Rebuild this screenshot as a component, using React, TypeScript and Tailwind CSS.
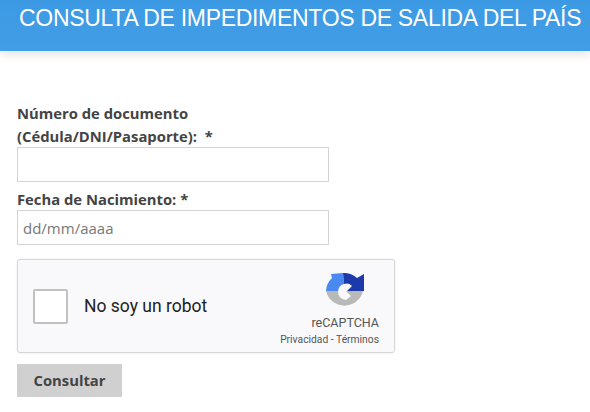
export default function App() {
  const sans = "font-['Open_Sans',sans-serif]";
  return (
    <div className="w-[590px] h-[412px] overflow-hidden bg-white">
      <header className="h-[51px] pl-[19px] pt-[4px] bg-gradient-to-b from-[#3c9ae4] to-[#419de5] shadow-[0_3px_10px_rgba(0,0,0,0.12)]">
        <h1 className="font-['Liberation_Sans',sans-serif] text-[23px] leading-[29px] tracking-[-0.3px] text-white whitespace-nowrap">
          CONSULTA DE IMPEDIMENTOS DE SALIDA DEL PAÍS
        </h1>
      </header>
      <main className={`pl-[17px] pt-[51px] ${sans}`}>
        <label className="block w-[312px] h-[45px] text-[14.8px] leading-[23px] font-bold text-[#444444]">
          Número de documento
          <br />
          (Cédula/DNI/Pasaporte):&nbsp; *
        </label>
        <input
          type="text"
          className="block w-[312px] h-[35px] border border-[#d4d4d4] bg-white px-[5px] outline-none"
        />
        <label className="block mt-[6px] h-[22px] text-[14.8px] leading-[23px] font-bold text-[#444444]">
          Fecha de Nacimiento:&nbsp;*
        </label>
        <input
          type="text"
          placeholder="dd/mm/aaaa"
          className="block w-[312px] h-[35px] border border-[#d4d4d4] bg-white px-[5px] text-[15px] text-[#666666] placeholder:text-[#777777] outline-none"
        />
        <div className="mt-[14px] w-[378px] h-[94px] flex items-center rounded-[3px] border border-[#d6d6d6] bg-[#f9f9fb] shadow-[0_0_3px_rgba(0,0,0,0.08)]">
          <div className="ml-[15px] w-[35px] h-[35px] rounded-[2px] border-2 border-[#c1c1c1] bg-white" />
          <span className="ml-[16px] flex-1 font-['Roboto',sans-serif] text-[17.5px] text-[#222222]">No soy un robot</span>
          <div className="flex flex-col items-end pt-[7px] pr-[15px]">
            <svg width="38" height="38" viewBox="0 0 38 38" className="mr-[15px]">
              <path d="M17 0 L18 11 A8 8 0 0 0 12 18 L0 18 A19 19 0 0 1 6 5 L5 1 L17 0 Z" fill="#4a8af0" />
              <path d="M17 0 A19 19 0 0 1 31 5 L38 1 L38 18 L21 18 L26 13 A8 8 0 0 0 18 11 Z" fill="#1c3aa9" />
              <path d="M0 18 L12 18 A8 8 0 0 0 20 27 L25 23 L20 18 L37 18 A19 19 0 0 1 0 18 Z" fill="#b9b9b9" />
            </svg>
            <span className="mt-[5px] font-['Roboto',sans-serif] text-[12.5px] leading-[14px] text-[#555555]">reCAPTCHA</span>
            <span className="mt-[4px] font-['Roboto',sans-serif] text-[10.3px] leading-[12px] text-[#555555] whitespace-nowrap">Privacidad - Términos</span>
          </div>
        </div>
        <button className="block mt-[11px] w-[105px] h-[33px] bg-[#d0d0d0] text-[14.8px] font-bold text-[#444444]">
          Consultar
        </button>
      </main>
    </div>
  );
}
